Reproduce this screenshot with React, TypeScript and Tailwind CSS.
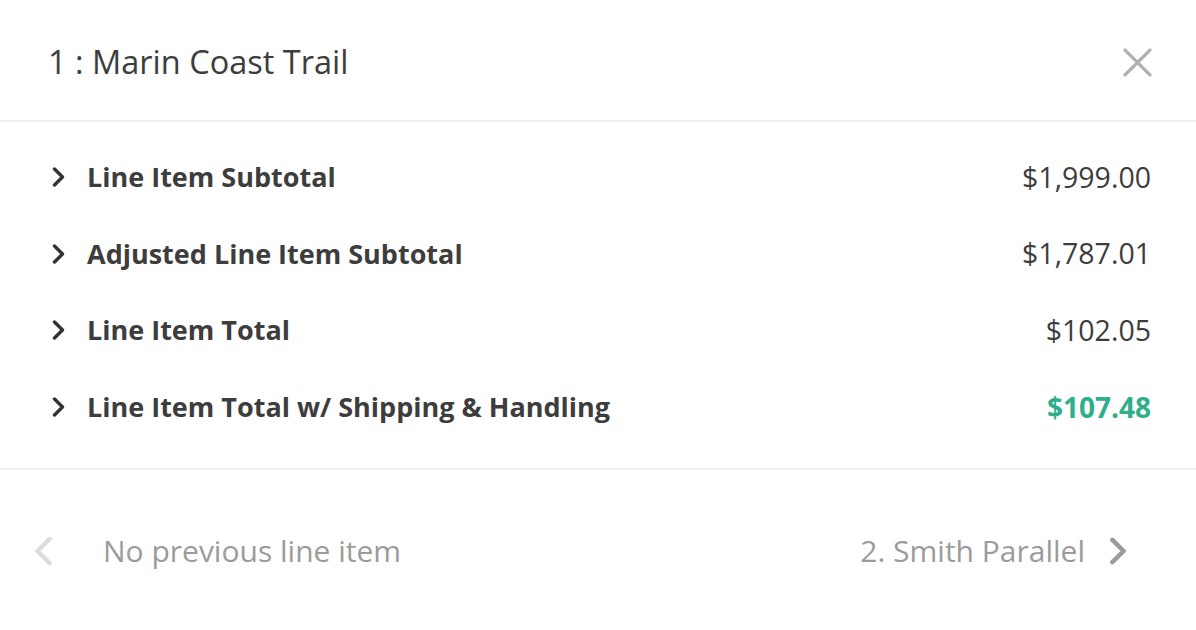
const rows = [
  { label: "Line Item Subtotal", value: "$1,999.00" },
  { label: "Adjusted Line Item Subtotal", value: "$1,787.01" },
  { label: "Line Item Total", value: "$102.05" },
  { label: "Line Item Total w/ Shipping & Handling", value: "$107.48", highlight: true },
];

const Chevron = ({
  dir,
  className,
  weight = 2.8,
}: {
  dir: "left" | "right";
  className?: string;
  weight?: number;
}) => (
  <svg viewBox="0 0 12 20" fill="none" className={className}>
    <polyline
      points={dir === "right" ? "2,2 10,10 2,18" : "10,2 2,10 10,18"}
      stroke="currentColor"
      strokeWidth={weight}
      strokeLinecap="round"
      strokeLinejoin="round"
    />
  </svg>
);

export default function App() {
  return (
    <div className="flex h-[630px] w-[1196px] flex-col bg-white font-['Open_Sans',sans-serif] text-[#3d3d3d]">
      {/* Header */}
      <div className="flex h-[122px] items-center justify-between border-b-2 border-[#efefef] pl-12 pr-[44px] pt-[5px]">
        <h1 className="text-[32.5px] font-normal">1 : Marin Coast Trail</h1>
        <button className="text-[#b0b0b0]">
          <svg viewBox="0 0 28 28" className="h-[29px] w-[29px]">
            <path d="M2 2 L26 26 M26 2 L2 26" stroke="currentColor" strokeWidth={3.2} strokeLinecap="round" />
          </svg>
        </button>
      </div>

      {/* Totals */}
      <div className="flex flex-col border-b-2 border-[#efefef] pb-[23px] pl-[52px] pr-[45px] pt-[17px]">
        {rows.map((row) => (
          <div key={row.label} className="flex h-[76.5px] items-center justify-between">
            <div className="flex items-center gap-[22px]">
              <Chevron dir="right" weight={3.4} className="h-[20px] w-[13px] text-[#333]" />
              <span className="text-[27px] font-bold">{row.label}</span>
            </div>
            <span
              className={
                row.highlight
                  ? "text-[28px] font-bold text-[#2eae8b]"
                  : "text-[28.5px] font-normal text-[#3d3d3d]"
              }
            >
              {row.value}
            </span>
          </div>
        ))}
      </div>

      {/* Footer nav */}
      <div className="flex items-center justify-between pl-[34px] pr-[69px] pt-[58px]">
        <div className="flex items-center gap-[50px]">
          <Chevron dir="left" weight={3} className="h-[30px] w-[19px] text-[#dcdcdc]" />
          <span className="text-[30px] text-[#9b9b9b]">No previous line item</span>
        </div>
        <div className="flex items-center gap-[24px]">
          <span className="text-[30px] text-[#9b9b9b]">2. Smith Parallel</span>
          <Chevron dir="right" weight={3.2} className="h-[28px] w-[18px] text-[#9b9b9b]" />
        </div>
      </div>
    </div>
  );
}
